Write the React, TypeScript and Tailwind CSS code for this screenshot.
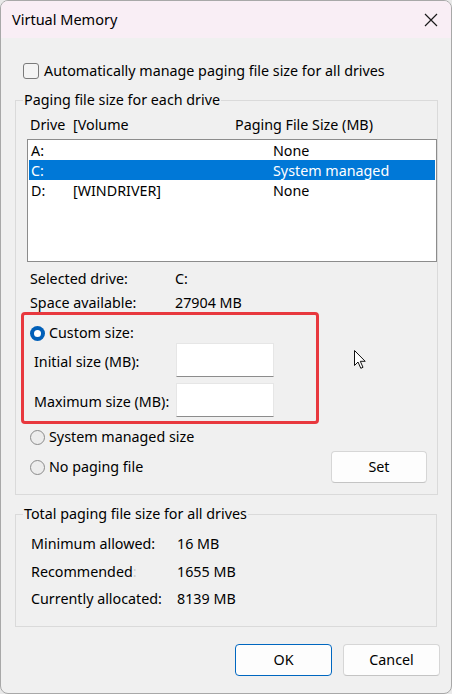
import React from "react";

const font = { fontFamily: '"Segoe UI", "Noto Sans", "Liberation Sans", sans-serif' };

function Radio({ checked }: { checked?: boolean }) {
  if (checked) {
    return (
      <span className="flex h-[15px] w-[15px] shrink-0 items-center justify-center rounded-full bg-[#005fb8]">
        <span className="h-[7px] w-[7px] rounded-full bg-white" />
      </span>
    );
  }
  return <span className="h-[15px] w-[15px] shrink-0 rounded-full border border-[#8a8a8a] bg-[#ececec]" />;
}

function TextBox() {
  return <div className="h-[34px] w-[98px] border border-[#e6e6e6] border-b-[#8c8c8c] bg-white" />;
}

function Button({ label, primary }: { label: string; primary?: boolean }) {
  return (
    <button
      className={
        "flex h-[32px] w-[97px] items-center justify-center rounded-[4px] bg-[#fdfdfd] text-black " +
        (primary ? "border border-[#0067c0]" : "border border-[#d6d6d6] border-b-[#c4c4c4]")
      }
    >
      {label}
    </button>
  );
}

export default function App() {
  const drives = [
    { d: "A:", v: "", s: "None" },
    { d: "C:", v: "", s: "System managed", sel: true },
    { d: "D:", v: "[WINDRIVER]", s: "None" },
  ];

  return (
    <div className="relative h-[694px] w-[452px] bg-[#e9e9e9] text-[14.3px] text-black" style={font}>
      <div className="flex h-full flex-col overflow-hidden rounded-[8px] border border-[#a8a8a8] bg-[#f0f0f0]">
        {/* Title bar */}
        <div className="flex h-[37px] shrink-0 items-center justify-between bg-[#f9eef5] pl-[11px] pr-[13px]">
          <span className="text-[14.5px] leading-none">Virtual Memory</span>
          <svg width="14" height="14" viewBox="0 0 14 14">
            <path d="M1 1 L13 13 M13 1 L1 13" stroke="#1a1a1a" strokeWidth="1.2" />
          </svg>
        </div>

        {/* Auto manage */}
        <div className="ml-[22px] mt-[23px] flex h-[20px] items-center gap-[5px]">
          <span className="h-[16px] w-[16px] rounded-[3px] border border-[#7a7a7a] bg-[#f4f4f4]" />
          <span>Automatically manage paging file size for all drives</span>
        </div>

        {/* Group 1 */}
        <fieldset className="ml-[14px] mt-[9px] w-[422px] border border-[#dadada] p-0 pb-[11px]">
          <legend className="ml-[7px] px-[1px] leading-[20px]">Paging file size for each drive</legend>
          <div className="mt-[4px] grid h-[20px] grid-cols-[43px_162px_1fr] items-center pl-[14px]">
            <span>Drive</span>
            <span>[Volume</span>
            <span>Paging File Size (MB)</span>
          </div>
          <div className="ml-[11px] mt-[5px] h-[123px] w-[410px] border border-[#8c8c8c] bg-white">
            {drives.map((r) => (
              <div
                key={r.d}
                className={
                  "mx-[1px] grid h-[20px] grid-cols-[42px_200px_1fr] items-center pl-[2px] " +
                  (r.sel ? "bg-[#0078d7] text-white" : "")
                }
              >
                <span>{r.d}</span>
                <span>{r.v}</span>
                <span>{r.s}</span>
              </div>
            ))}
          </div>

          <div className="ml-[14px] mt-[6px] grid h-[20px] grid-cols-[145px_1fr] items-center">
            <span>Selected drive:</span>
            <span>C:</span>
          </div>
          <div className="ml-[14px] mt-[4px] grid h-[20px] grid-cols-[145px_1fr] items-center">
            <span>Space available:</span>
            <span>27904 MB</span>
          </div>

          {/* Highlighted custom size */}
          <div className="ml-[5px] h-[112px] w-[298px] rounded-[4px] border-[3px] border-[#e8383e]">
            <div className="ml-[6px] mt-[8px] flex h-[20px] items-center gap-[4px]">
              <Radio checked />
              <span>Custom size:</span>
            </div>
            <div className="ml-[10px] flex items-center">
              <span className="mt-[4px] w-[142px]">Initial size (MB):</span>
              <TextBox />
            </div>
            <div className="ml-[10px] mt-[6px] flex items-center">
              <span className="mt-[4px] w-[142px]">Maximum size (MB):</span>
              <TextBox />
            </div>
          </div>

          <div className="ml-[14px] mt-[3px] flex h-[20px] items-center gap-[4px]">
            <Radio />
            <span>System managed size</span>
          </div>
          <div className="ml-[14px] mr-[10px] mt-[4px] flex h-[32px] items-center gap-[4px]">
            <Radio />
            <span>No paging file</span>
            <button className="ml-auto flex h-[32px] w-[96px] items-center justify-center rounded-[4px] border border-[#d6d6d6] border-b-[#c4c4c4] bg-[#fdfdfd]">
              Set
            </button>
          </div>
        </fieldset>

        {/* Group 2 */}
        <fieldset className="ml-[14px] mt-[9px] w-[422px] border border-[#dadada] p-0 pb-[18px]">
          <legend className="ml-[7px] px-[1px] leading-[20px]">Total paging file size for all drives</legend>
          <div className="ml-[15px] mt-[9px] grid h-[20px] grid-cols-[146px_1fr] items-center">
            <span>Minimum allowed:</span>
            <span>16 MB</span>
          </div>
          <div className="ml-[15px] mt-[8px] grid h-[20px] grid-cols-[146px_1fr] items-center">
            <span>
              Recommended<span className="text-[#cfcfcf]">:</span>
            </span>
            <span>1655 MB</span>
          </div>
          <div className="ml-[15px] mt-[7px] grid h-[20px] grid-cols-[146px_1fr] items-center">
            <span>Currently allocated:</span>
            <span>8139 MB</span>
          </div>
        </fieldset>

        <div className="mr-[11px] mt-[17px] flex justify-end gap-[11px]">
          <Button label="OK" primary />
          <Button label="Cancel" />
        </div>
      </div>

      {/* Mouse pointer */}
      <svg className="absolute left-[354px] top-[350px]" width="13" height="20" viewBox="0 0 13 20">
        <path
          d="M0.5 0.5 L0.5 15.5 L4 12 L6.8 18.3 L9 17.3 L6.3 11.3 L11.2 11.3 Z"
          fill="white"
          stroke="#111"
          strokeWidth="1"
          strokeLinejoin="round"
        />
      </svg>
    </div>
  );
}
